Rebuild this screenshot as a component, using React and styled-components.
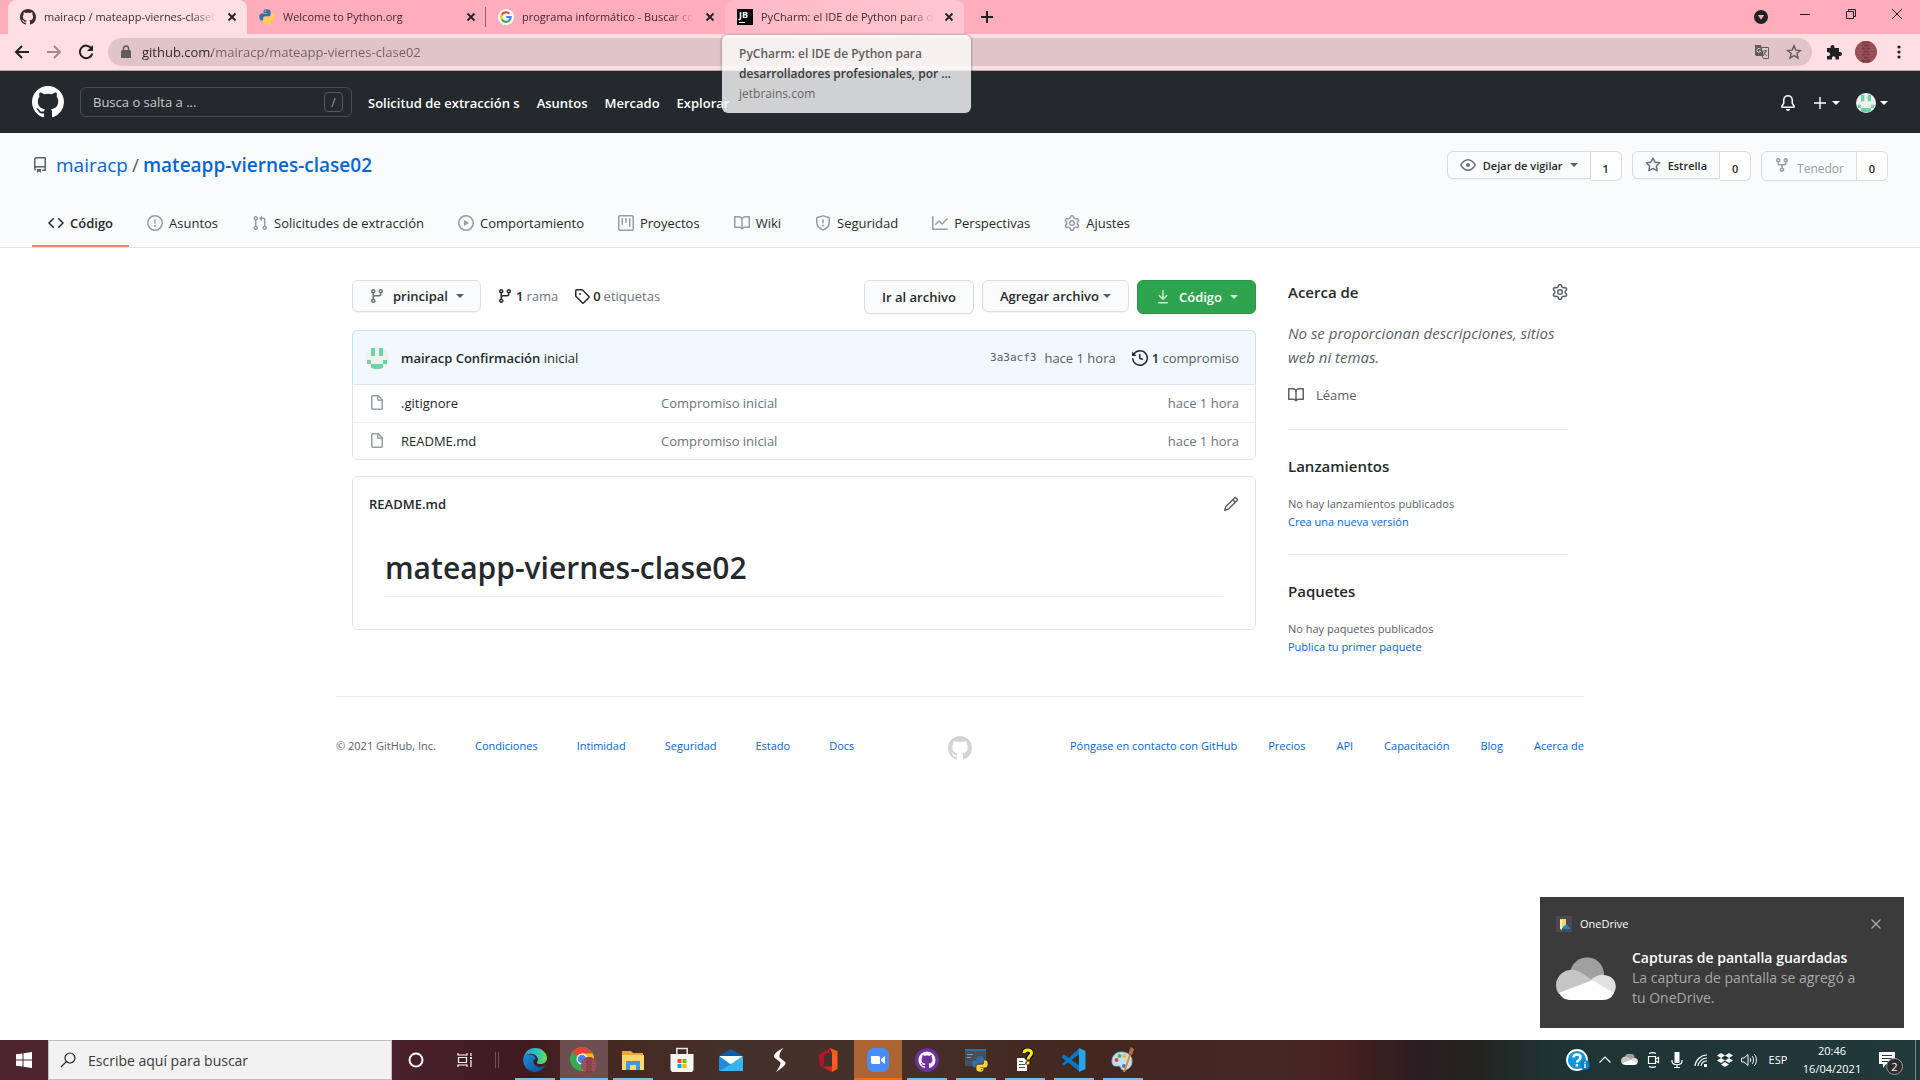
import React from 'react';
import styled, { createGlobalStyle, css } from 'styled-components';

const Global = createGlobalStyle`
  *, *::before, *::after { box-sizing: border-box; }
  body { margin: 0; background: #fff; }
  body, button, input { font-family: "Open Sans", "Noto Sans", sans-serif; }
  button { margin: 0; padding: 0; border: 0; background: none; color: inherit; cursor: pointer; }
  a { color: inherit; text-decoration: none; }
  svg { display: block; flex: none; }
  h1, h2, p, ul { margin: 0; padding: 0; }
  ul { list-style: none; }
`;

const Screen = styled.div`
  display: flex;
  flex-direction: column;
  min-height: 100vh;
  color: #24292e;
  font-size: 13px;
  line-height: 20px;
`;

/* ---------- icons ---------- */

const paths = {
  github: 'M8 0C3.58 0 0 3.58 0 8c0 3.54 2.29 6.53 5.47 7.59.4.07.55-.17.55-.38 0-.19-.01-.82-.01-1.49-2.01.37-2.53-.49-2.69-.94-.09-.23-.48-.94-.82-1.13-.28-.15-.68-.52-.01-.53.63-.01 1.08.58 1.23.82.72 1.21 1.87.87 2.33.66.07-.52.28-.87.51-1.07-1.78-.2-3.64-.89-3.64-3.95 0-.87.31-1.59.82-2.15-.08-.2-.36-1.02.08-2.12 0 0 .67-.21 2.2.82.64-.18 1.32-.27 2-.27.68 0 1.36.09 2 .27 1.53-1.04 2.2-.82 2.2-.82.44 1.1.16 1.92.08 2.12.51.56.82 1.27.82 2.15 0 3.07-1.87 3.75-3.65 3.95.29.25.54.73.54 1.48 0 1.07-.01 1.93-.01 2.2 0 .21.15.46.55.38A8.013 8.013 0 0016 8c0-4.42-3.58-8-8-8z',
  repo: 'M2 2.5A2.5 2.5 0 014.5 0h8.75a.75.75 0 01.75.75v12.5a.75.75 0 01-.75.75h-2.5a.75.75 0 110-1.5h1.75v-2h-8a1 1 0 00-.714 1.7.75.75 0 01-1.072 1.05A2.495 2.495 0 012 11.5v-9zm10.5-1V9h-8c-.356 0-.694.074-1 .208V2.5a1 1 0 011-1h8zM5 12.25v3.25a.25.25 0 00.4.2l1.45-1.087a.25.25 0 01.3 0L8.6 15.7a.25.25 0 00.4-.2v-3.25a.25.25 0 00-.25-.25h-3.5a.25.25 0 00-.25.25z',
  code: 'M4.72 3.22a.75.75 0 011.06 1.06L2.06 8l3.72 3.72a.75.75 0 11-1.06 1.06L.47 8.53a.75.75 0 010-1.06l4.25-4.25zm6.56 0a.75.75 0 10-1.06 1.06L13.94 8l-3.72 3.72a.75.75 0 101.06 1.06l4.25-4.25a.75.75 0 000-1.06l-4.25-4.25z',
  issue: 'M8 1.5a6.5 6.5 0 100 13 6.5 6.5 0 000-13zM0 8a8 8 0 1116 0A8 8 0 010 8zm9 3a1 1 0 11-2 0 1 1 0 012 0zm-.25-6.25a.75.75 0 00-1.5 0v3.5a.75.75 0 001.5 0v-3.5z',
  pull: 'M7.177 3.073L9.573.677A.25.25 0 0110 .854v4.792a.25.25 0 01-.427.177L7.177 3.427a.25.25 0 010-.354zM3.75 2.5a.75.75 0 100 1.5.75.75 0 000-1.5zm-2.25.75a2.25 2.25 0 113 2.122v5.256a2.251 2.251 0 11-1.5 0V5.372A2.25 2.25 0 011.5 3.25zM11 2.5h-1V4h1a1 1 0 011 1v5.628a2.251 2.251 0 101.5 0V5A2.5 2.5 0 0011 2.5zm1 10.25a.75.75 0 111.5 0 .75.75 0 01-1.5 0zM3.75 12a.75.75 0 100 1.5.75.75 0 000-1.5z',
  play: 'M1.5 8a6.5 6.5 0 1113 0 6.5 6.5 0 01-13 0zM8 0a8 8 0 100 16A8 8 0 008 0zM6.379 5.227A.25.25 0 006 5.442v5.117a.25.25 0 00.379.214l4.264-2.559a.25.25 0 000-.428L6.379 5.227z',
  project: 'M1.75 0A1.75 1.75 0 000 1.75v12.5C0 15.216.784 16 1.75 16h12.5A1.75 1.75 0 0016 14.25V1.75A1.75 1.75 0 0014.25 0H1.75zM1.5 1.75a.25.25 0 01.25-.25h12.5a.25.25 0 01.25.25v12.5a.25.25 0 01-.25.25H1.75a.25.25 0 01-.25-.25V1.75zM11.75 3a.75.75 0 00-.75.75v7.5a.75.75 0 001.5 0v-7.5a.75.75 0 00-.75-.75zm-8.25.75a.75.75 0 011.5 0v5.5a.75.75 0 01-1.5 0v-5.5zM8 3a.75.75 0 00-.75.75v3.5a.75.75 0 001.5 0v-3.5A.75.75 0 008 3z',
  book: 'M0 1.75A.75.75 0 01.75 1h4.253c1.227 0 2.317.59 3 1.501A3.744 3.744 0 0111.006 1h4.245a.75.75 0 01.75.75v10.5a.75.75 0 01-.75.75h-4.507a2.25 2.25 0 00-1.591.659l-.622.621a.75.75 0 01-1.06 0l-.622-.621A2.25 2.25 0 005.258 13H.75a.75.75 0 01-.75-.75V1.75zm8.755 3a2.25 2.25 0 012.25-2.25H14.5v9h-3.757c-.71 0-1.4.201-1.992.572l.004-7.322zm-1.504 7.324l.004-5.073-.002-2.253A2.25 2.25 0 005.003 2.5H1.5v9h3.757a3.75 3.75 0 011.994.574z',
  shield: 'M7.467.133a1.75 1.75 0 011.066 0l5.25 1.68A1.75 1.75 0 0115 3.48V7c0 1.566-.32 3.182-1.303 4.682-.983 1.498-2.585 2.813-5.032 3.855a1.7 1.7 0 01-1.33 0c-2.447-1.042-4.049-2.357-5.032-3.855C1.32 10.182 1 8.566 1 7V3.48a1.75 1.75 0 011.217-1.667l5.25-1.68zm.61 1.429a.25.25 0 00-.153 0l-5.25 1.68a.25.25 0 00-.174.238V7c0 1.358.275 2.666 1.057 3.86.784 1.194 2.121 2.34 4.366 3.297a.2.2 0 00.154 0c2.245-.956 3.582-2.104 4.366-3.298C13.225 9.666 13.5 8.36 13.5 7V3.48a.25.25 0 00-.174-.237l-5.25-1.68zM9 10.5a1 1 0 11-2 0 1 1 0 012 0zm-.25-5.75a.75.75 0 10-1.5 0v3a.75.75 0 001.5 0v-3z',
  graph: 'M1.5 1.75a.75.75 0 00-1.5 0v12.5c0 .414.336.75.75.75h14.5a.75.75 0 000-1.5H1.5V1.75zm14.28 2.53a.75.75 0 00-1.06-1.06L10 7.94 7.53 5.47a.75.75 0 00-1.06 0L3.22 8.72a.75.75 0 001.06 1.06L7 7.06l2.47 2.47a.75.75 0 001.06 0l5.25-5.25z',
  download: 'M7.47 10.78a.75.75 0 001.06 0l3.75-3.75a.75.75 0 00-1.06-1.06L8.75 8.44V1.75a.75.75 0 00-1.5 0v6.69L4.78 5.97a.75.75 0 00-1.06 1.06l3.75 3.75zM3.75 13a.75.75 0 000 1.5h8.5a.75.75 0 000-1.5h-8.5z',
  history: 'M1.643 3.143L.427 1.927A.25.25 0 000 2.104V5.75c0 .138.112.25.25.25h3.646a.25.25 0 00.177-.427L2.715 4.215a6.5 6.5 0 11-1.18 4.458.75.75 0 10-1.493.154 8.001 8.001 0 101.6-5.684zM7.75 4a.75.75 0 01.75.75v2.992l2.028.812a.75.75 0 01-.557 1.392l-2.5-1A.75.75 0 017 8.25v-3.5A.75.75 0 017.75 4z',
  gear: 'M7.429 1.525a6.593 6.593 0 011.142 0c.036.003.108.036.137.146l.289 1.105c.147.56.55.967.997 1.189.174.086.341.183.501.29.417.278.97.423 1.53.27l1.102-.303c.11-.03.175.016.195.046.219.31.41.641.573.989.014.031.022.11-.059.19l-.815.806c-.411.406-.562.957-.53 1.456a4.588 4.588 0 010 .582c-.032.499.119 1.05.53 1.456l.815.806c.08.08.073.159.059.19a6.494 6.494 0 01-.573.99c-.02.029-.086.074-.195.045l-1.103-.303c-.559-.153-1.112-.008-1.529.27-.16.107-.327.204-.5.29-.449.222-.851.628-.998 1.189l-.289 1.105c-.029.11-.101.143-.137.146a6.613 6.613 0 01-1.142 0c-.036-.003-.108-.037-.137-.146l-.289-1.105c-.147-.56-.55-.967-.997-1.189a4.502 4.502 0 01-.501-.29c-.417-.278-.97-.423-1.53-.27l-1.102.303c-.11.03-.175-.016-.195-.046a6.492 6.492 0 01-.573-.989c-.014-.031-.022-.11.059-.19l.815-.806c.411-.406.562-.957.53-1.456a4.587 4.587 0 010-.582c.032-.499-.119-1.05-.53-1.456l-.815-.806c-.08-.08-.073-.159-.059-.19a6.44 6.44 0 01.573-.99c.02-.029.086-.075.195-.045l1.103.303c.559.153 1.112.008 1.529-.27.16-.107.327-.204.5-.29.449-.222.851-.628.998-1.189l.289-1.105c.029-.11.101-.143.137-.146zM8 0c-.236 0-.47.01-.701.03-.743.065-1.29.615-1.458 1.261l-.29 1.106c-.017.066-.078.158-.211.224a5.994 5.994 0 00-.668.386c-.123.082-.233.09-.3.071L3.27 2.776c-.644-.177-1.392.02-1.82.63a7.977 7.977 0 00-.704 1.217c-.315.675-.111 1.422.363 1.891l.815.806c.05.048.098.147.088.294a6.084 6.084 0 000 .772c.01.147-.038.246-.088.294l-.815.806c-.474.469-.678 1.216-.363 1.891.2.428.436.835.704 1.218.428.609 1.176.806 1.82.63l1.103-.303c.066-.019.176-.011.299.071.213.143.436.272.668.386.133.066.194.158.212.224l.289 1.106c.169.646.715 1.196 1.458 1.26a8.094 8.094 0 001.402 0c.743-.064 1.29-.614 1.458-1.26l.29-1.106c.017-.066.078-.158.211-.224a5.98 5.98 0 00.668-.386c.123-.082.233-.09.3-.071l1.102.302c.644.177 1.392-.02 1.82-.63.268-.382.505-.789.704-1.217.315-.675.111-1.422-.364-1.891l-.814-.806c-.05-.048-.098-.147-.088-.294a6.1 6.1 0 000-.772c-.01-.147.039-.246.088-.294l.814-.806c.475-.469.679-1.216.364-1.891a7.992 7.992 0 00-.704-1.218c-.428-.609-1.176-.806-1.82-.63l-1.103.303c-.066.019-.176.011-.299-.071a5.991 5.991 0 00-.668-.386c-.133-.066-.194-.158-.212-.224L10.16 1.29C9.99.645 9.444.095 8.701.031A8.094 8.094 0 008 0zm1.5 8a1.5 1.5 0 11-3 0 1.5 1.5 0 013 0zM11 8a3 3 0 11-6 0 3 3 0 016 0z',
  file: 'M3.75 1.5a.25.25 0 00-.25.25v11.5c0 .138.112.25.25.25h8.5a.25.25 0 00.25-.25V6H9.75A1.75 1.75 0 018 4.25V1.5H3.75zm5.75.56v2.19c0 .138.112.25.25.25h2.19L9.5 2.06zM2 1.75C2 .784 2.784 0 3.75 0h5.086c.464 0 .909.184 1.237.513l3.414 3.414c.329.328.513.773.513 1.237v8.086A1.75 1.75 0 0112.25 15h-8.5A1.75 1.75 0 012 13.25V1.75z',
  branch: 'M11.75 2.5a.75.75 0 100 1.5.75.75 0 000-1.5zm-2.25.75a2.25 2.25 0 113 2.122V6A2.5 2.5 0 0110 8.5H6a1 1 0 00-1 1v1.128a2.251 2.251 0 11-1.5 0V5.372a2.25 2.25 0 111.5 0v1.836A2.492 2.492 0 016 7h4a1 1 0 001-1v-.628A2.25 2.25 0 019.5 3.25zM4.25 12a.75.75 0 100 1.5.75.75 0 000-1.5zM3.5 3.25a.75.75 0 111.5 0 .75.75 0 01-1.5 0z',
  fork: 'M5 3.25a.75.75 0 11-1.5 0 .75.75 0 011.5 0zm0 2.122a2.25 2.25 0 10-1.5 0v.878A2.25 2.25 0 005.75 8.5h1.5v2.128a2.251 2.251 0 101.5 0V8.5h1.5a2.25 2.25 0 002.25-2.25v-.878a2.25 2.25 0 10-1.5 0v.878a.75.75 0 01-.75.75h-4.5A.75.75 0 015 6.25v-.878zm3.75 7.378a.75.75 0 11-1.5 0 .75.75 0 011.5 0zm3-8.75a.75.75 0 100-1.5.75.75 0 000 1.5z',
  star: 'M8 .25a.75.75 0 01.673.418l1.882 3.815 4.21.612a.75.75 0 01.416 1.279l-3.046 2.97.719 4.192a.75.75 0 01-1.088.791L8 12.347l-3.766 1.98a.75.75 0 01-1.088-.79l.72-4.194L.818 6.374a.75.75 0 01.416-1.28l4.21-.611L7.327.668A.75.75 0 018 .25zm0 2.445L6.615 5.5a.75.75 0 01-.564.41l-3.097.45 2.24 2.184a.75.75 0 01.216.664l-.528 3.084 2.769-1.456a.75.75 0 01.698 0l2.77 1.456-.53-3.084a.75.75 0 01.216-.664l2.24-2.183-3.096-.45a.75.75 0 01-.564-.41L8 2.694v.001z',
  eye: 'M1.679 7.932c.412-.621 1.242-1.75 2.366-2.717C5.175 4.242 6.527 3.5 8 3.5c1.473 0 2.824.742 3.955 1.715 1.124.967 1.954 2.096 2.366 2.717a.119.119 0 010 .136c-.412.621-1.242 1.75-2.366 2.717C10.825 11.758 9.473 12.5 8 12.5c-1.473 0-2.824-.742-3.955-1.715C2.92 9.818 2.09 8.69 1.679 8.068a.119.119 0 010-.136zM8 2c-1.981 0-3.67.992-4.933 2.078C1.797 5.169.88 6.423.43 7.1a1.619 1.619 0 000 1.798c.45.678 1.367 1.932 2.637 3.024C4.329 13.008 6.019 14 8 14c1.981 0 3.67-.992 4.933-2.078 1.27-1.091 2.187-2.345 2.637-3.023a1.619 1.619 0 000-1.798c-.45-.678-1.367-1.932-2.637-3.023C11.671 2.992 9.981 2 8 2zm0 8a2 2 0 100-4 2 2 0 000 4z',
  tag: 'M2.5 7.775V2.75a.25.25 0 01.25-.25h5.025a.25.25 0 01.177.073l6.25 6.25a.25.25 0 010 .354l-5.025 5.025a.25.25 0 01-.354 0l-6.25-6.25a.25.25 0 01-.073-.177zm-1.5 0V2.75C1 1.784 1.784 1 2.75 1h5.025c.464 0 .91.184 1.238.513l6.25 6.25a1.75 1.75 0 010 2.474l-5.026 5.026a1.75 1.75 0 01-2.474 0l-6.25-6.25A1.75 1.75 0 011 7.775zM6 5a1 1 0 100 2 1 1 0 000-2z',
  pencil: 'M11.013 1.427a1.75 1.75 0 012.474 0l1.086 1.086a1.75 1.75 0 010 2.474l-8.61 8.61c-.21.21-.47.364-.756.445l-3.251.93a.75.75 0 01-.927-.928l.929-3.25a1.75 1.75 0 01.445-.758l8.61-8.61zm1.414 1.06a.25.25 0 00-.354 0L10.811 3.75l1.439 1.44 1.263-1.263a.25.25 0 000-.354l-1.086-1.086zM11.189 6.25L9.75 4.81l-6.286 6.287a.25.25 0 00-.064.108l-.558 1.953 1.953-.558a.249.249 0 00.108-.064l6.286-6.286z',
  bell: 'M8 16a2 2 0 001.985-1.75c.017-.137-.097-.25-.235-.25h-3.5c-.138 0-.252.113-.235.25A2 2 0 008 16zM8 1.5A3.5 3.5 0 004.5 5v2.947c0 .346-.102.683-.294.97L2.5 11.5h11l-1.706-2.583a1.75 1.75 0 01-.294-.97V5A3.5 3.5 0 008 1.5zM3 5a5 5 0 0110 0v2.947c0 .05.015.098.042.139l1.703 2.555A1.518 1.518 0 0113.482 13H2.518a1.518 1.518 0 01-1.263-2.36l1.703-2.554A.25.25 0 003 7.947V5z',
};

const Octicon = ({ name, size = 16 }) => (
  <svg width={size} height={size} viewBox="0 0 16 16" fill="currentColor" fillRule="evenodd" aria-hidden="true">
    <path d={paths[name]} />
  </svg>
);

const Caret = styled.span`
  width: 0;
  height: 0;
  border: 4px solid transparent;
  border-top-color: currentColor;
  border-bottom-width: 0;
  opacity: ${(p) => (p.$soft ? 0.75 : 1)};
`;

const Line = ({ d, size = 16, box = 16, w = 1, children }) => (
  <svg width={size} height={size} viewBox={`0 0 ${box} ${box}`} fill="none" stroke="currentColor" strokeWidth={w} aria-hidden="true">
    <path d={d} />
    {children}
  </svg>
);

const Python = ({ size = 16 }) => (
  <svg width={size} height={size} viewBox="0 0 16 16" aria-hidden="true">
    <path fill="#3673a5" d="M7.900.3C5 .3 4.500 1.300 4.500 2.400V4h3.600v.6H2.800C1.200 4.600.3 5.900.3 8s.9 3.400 2.200 3.400h1.400V9.600c0-1.300 1.100-2.300 2.400-2.300h3.400c1.100 0 1.900-.9 1.900-2V2.400C11.600 1.200 10.400.3 7.900.3zM6.200 1.500a.7.7 0 110 1.400.7.7 0 010-1.400z" />
    <path fill="#ffd43b" d="M8.100 15.700c2.900 0 3.400-1 3.400-2.100V12H7.900v-.6h5.300c1.600 0 2.500-1.300 2.500-3.400s-.9-3.400-2.200-3.400h-1.400v1.800c0 1.300-1.100 2.300-2.400 2.300H6.300c-1.100 0-1.900.9-1.900 2v2.900c0 1.200 1.200 2.100 3.700 2.100zm1.700-1.200a.7.7 0 110-1.400.7.7 0 010 1.400z" />
  </svg>
);

const Google = () => (
  <svg width="16" height="16" viewBox="0 0 16 16" aria-hidden="true">
    <circle cx="8" cy="8" r="8" fill="#fff" />
    <g fill="none" strokeWidth="2.200">
      <path stroke="#ea4335" d="M3.800 5.700A4.800 4.800 0 0111.300 4.600" />
      <path stroke="#fbbc05" d="M3.900 10.400a4.800 4.800 0 010-4.800" />
      <path stroke="#34a853" d="M3.800 10.300a4.800 4.800 0 007.500 1.200" />
      <path stroke="#4285f4" d="M8.200 8h4.500c0 1.500-.5 2.700-1.500 3.600" />
    </g>
  </svg>
);

const JetBox = styled.span`
  display: flex;
  flex: none;
  width: 16px;
  height: 16px;
  padding-left: 2px;
  background: linear-gradient(#fff, #fff) 2px 13px / 6px 1px no-repeat #000;
  color: #fff;
  font: 700 9px/12px "Open Sans", sans-serif;
`;

const Identicon = ({ size }) => (
  <svg width={size} height={size} viewBox="0 0 24 24" aria-hidden="true">
    <circle cx="12" cy="12" r="12" fill="#f0f0f0" />
    <path fill="#68d5a2" d="M6 2h4v8H6zM14 2h4v8h-4zM2 14h4v4H2zM18 14h4v4h-4zM6 18h12v3.500l-3 1.500H9l-3-1.500z" />
  </svg>
);

const BrickFace = ({ size }) => (
  <svg width={size} height={size} viewBox="0 0 22 22" aria-hidden="true">
    <defs>
      <clipPath id={`brick${size}`}><circle cx="11" cy="11" r="11" /></clipPath>
    </defs>
    <g clipPath={`url(#brick${size})`}>
      <path fill="#93484f" d="M0 0h22v22H0z" />
      <path fill="#6a2a33" d="M7 0h8v22H7z" opacity=".5" />
      <path stroke="#b07078" strokeWidth=".5" d="M0 3h22M0 6h22M0 9h22M0 12h22M0 15h22M0 18h22M5 0v3M11 0v3M17 0v3M3 3v3M8 3v3M14 3v3M5 6v3M11 6v3M17 6v3M3 9v3M8 9v3M14 9v3M5 12v3M11 12v3M17 12v3M3 15v3M8 15v3M14 15v3M5 18v4M11 18v4M17 18v4" />
    </g>
  </svg>
);

/* ---------- browser frame ---------- */

const TabStrip = styled.div`
  display: flex;
  height: 34px;
  padding-left: 8px;
  background: #ffadbc;
  color: #3c2c30;
`;

const Tab = styled.div`
  display: flex;
  align-items: center;
  flex: 0 1 239px;
  gap: 8px;
  min-width: 0;
  padding: 0 7px 0 12px;
  border-radius: 8px 8px 0 0;
  font-size: 11px;
  ${(p) => p.$state === 'active' && css`background: #ffdee4;`}
  ${(p) => p.$state === 'hover' && css`background: linear-gradient(90deg, #ffb9c6, #ffc6d1);`}
  ${(p) => p.$divider && css`
    border-radius: 0;
    background: linear-gradient(#96626c, #96626c) right center / 1px 20px no-repeat;
  `}
`;

const TabTitle = styled.span`
  flex: 1;
  min-width: 0;
  white-space: nowrap;
  mask-image: linear-gradient(90deg, #000 calc(100% - 24px), transparent);
`;

const IconButton = styled.button`
  display: flex;
  align-items: center;
  justify-content: center;
  flex: none;
  width: ${(p) => p.$w || 16}px;
  height: ${(p) => p.$h || 16}px;
  color: ${(p) => p.$color || '#202124'};
`;

const WindowControls = styled.div`
  display: flex;
  align-items: flex-start;
  margin-left: auto;
`;

const Toolbar = styled.div`
  display: flex;
  align-items: center;
  height: 37px;
  padding: 0 5px 0 6px;
  background: #ffdee4;
  border-bottom: 1px solid #b8a0a5;
`;

const Omnibox = styled.div`
  display: flex;
  align-items: center;
  flex: 1;
  height: 28px;
  margin: 0 6px;
  padding: 0 10px 0 12px;
  gap: 8px;
  border-radius: 14px;
  background: #e1c4c9;
  color: #5f5a5c;
`;

const Address = styled.input`
  flex: 1;
  min-width: 0;
  padding: 0 2px;
  border: 0;
  outline: 0;
  font-size: 13px;
  background: linear-gradient(90deg, #2c2628 72px, #6f6064 72px);
  background-clip: text;
  color: transparent;
`;

const HoverCard = styled.div`
  position: absolute;
  top: 35px;
  left: 722px;
  width: 249px;
  height: 78px;
  padding: 9px 17px;
  border-radius: 6px;
  background: rgba(251, 251, 251, 0.8);
  box-shadow: 0 0 2px 1px rgba(60, 60, 60, 0.35);
  color: #6a6668;
  font-size: 12px;
  line-height: 20px;
  white-space: nowrap;
`;

const CardTitle = styled.p`
  font-weight: 600;
  color: ${(p) => (p.$dark ? '#3b3c3e' : '#625e60')};
`;

/* ---------- GitHub header ---------- */

const SiteHeader = styled.header`
  display: flex;
  align-items: center;
  gap: 16px;
  height: 62px;
  padding: 0 32px;
  background: #24292e;
  color: #fff;
`;

const SearchBox = styled.label`
  display: flex;
  align-items: center;
  width: 272px;
  height: 30px;
  padding: 0 8px 0 12px;
  border: 1px solid #444d56;
  border-radius: 6px;
`;

const SearchInput = styled.input`
  flex: 1;
  min-width: 0;
  padding: 0;
  border: 0;
  outline: 0;
  background: none;
  color: #fff;
  font-size: 13px;
  &::placeholder { color: #c6c9cc; opacity: 1; }
`;

const Slash = styled.kbd`
  display: flex;
  align-items: center;
  justify-content: center;
  width: 19px;
  height: 20px;
  border: 1px solid #55595e;
  border-radius: 4px;
  color: #9a9ea2;
  font: 12px "Open Sans", sans-serif;
`;

const SiteNav = styled.nav`
  display: flex;
  gap: 17px;
  padding-top: 2px;
  font-weight: 600;
`;

const HeaderActions = styled.div`
  display: flex;
  align-items: center;
  gap: 16px;
  margin-left: auto;
  padding-top: 2px;
`;

const MenuButton = styled.button`
  display: flex;
  align-items: center;
  gap: 4px;
`;

/* ---------- repository head ---------- */

const RepoHead = styled.div`
  padding: 16px 32px 0;
  background: #fafbfc;
  border-bottom: 1px solid #e1e4e8;
`;

const RepoRow = styled.div`
  display: flex;
  justify-content: space-between;
  height: 50px;
`;

const Breadcrumb = styled.div`
  display: flex;
  align-items: center;
  height: 32px;
  gap: 4px;
  color: #586069;
  font-size: 19px;
  line-height: 32px;
  svg { margin-right: 4px; }
  a { color: #0366d6; }
  strong { font-weight: 600; }
`;

const RepoActions = styled.div`
  display: flex;
  align-items: flex-start;
  gap: 10px;
  padding-top: 2px;
`;

const ButtonGroup = styled.div`
  display: flex;
  align-items: flex-start;
`;

const ActionButton = styled.button`
  display: flex;
  align-items: center;
  gap: 7px;
  height: ${(p) => (p.$tall ? 30 : 28)}px;
  padding: 0 12px;
  border: 1px solid #d9dbdd;
  border-radius: 6px 0 0 6px;
  background: #fafbfc;
  box-shadow: 0 1px 0 rgba(27, 31, 35, 0.04);
  color: #24292e;
  font-size: 11px;
  font-weight: 600;
  white-space: nowrap;
  svg { color: #6a737d; }
  &:disabled { color: #959da5; font-weight: 400; font-size: 12px; line-height: 26px; align-items: flex-start; padding-top: 4px; }
  &:disabled svg { color: #959da5; margin-top: 1px; }
`;

const Count = styled.a`
  height: 30px;
  min-width: 31px;
  padding: 0 11px;
  border: 1px solid #d9dbdd;
  border-left: 0;
  border-radius: 0 6px 6px 0;
  background: #fff;
  font-size: 11px;
  font-weight: 600;
  line-height: 33px;
  text-align: center;
`;

const RepoTabs = styled.nav`
  display: flex;
  gap: 2px;
`;

const RepoTab = styled.a`
  display: flex;
  align-items: center;
  gap: 6px;
  height: 48px;
  padding: 2px 16px 0;
  border-bottom: 2px solid ${(p) => (p.$on ? '#f9826c' : 'transparent')};
  font-weight: ${(p) => (p.$on ? 600 : 400)};
  svg { color: ${(p) => (p.$on ? '#24292e' : '#959da5')}; }
`;

/* ---------- main content ---------- */

const Content = styled.main`
  display: grid;
  grid-template-columns: minmax(0, 1fr) 280px;
  gap: 32px;
  width: 100%;
  max-width: 1280px;
  margin: 0 auto;
  padding: 32px 32px 0;
`;

const FileBar = styled.div`
  display: flex;
  align-items: flex-start;
  gap: 8px;
  height: 34px;
  margin-bottom: 16px;
`;

const BarButton = styled.button`
  display: flex;
  align-items: center;
  justify-content: center;
  gap: ${(p) => p.$gap || 4}px;
  height: ${(p) => (p.$tall ? 34 : 32)}px;
  padding: 0 ${(p) => p.$pad || 17}px;
  border: 1px solid #dcdee0;
  border-radius: 6px;
  background: #fafbfc;
  box-shadow: 0 1px 0 rgba(27, 31, 35, 0.04);
  font-size: 13px;
  font-weight: 600;
  white-space: nowrap;
  svg { color: #6a737d; }
  ${(p) => p.$primary && css`
    background: #2ea44f;
    border-color: #2a9447;
    color: #fff;
    svg { color: #c8e8d0; }
  `}
`;

const Stat = styled.a`
  display: flex;
  align-items: center;
  gap: 3px;
  height: 32px;
  padding-left: 8px;
  color: #6a737d;
  white-space: nowrap;
  strong, svg { color: #24292e; }
  strong { font-weight: 600; }
`;

const Spacer = styled.span`
  flex: 1;
`;

const Box = styled.section`
  border: 1px solid #e1e4e8;
  border-radius: 6px;
  margin-bottom: 16px;
`;

const CommitBar = styled.div`
  display: flex;
  align-items: center;
  gap: 12px;
  height: 55px;
  margin: -1px -1px 0;
  padding: 0 16px 0 12px;
  border: 1px solid #c8e1ff;
  border-bottom-color: #e1e7ee;
  border-radius: 6px 6px 0 0;
  background: #f1f8ff;
  strong { font-weight: 600; }
`;

const CommitMeta = styled.div`
  display: flex;
  align-items: center;
  gap: 8px;
  margin-left: auto;
  color: #586069;
  code { font: 11px/22px "DejaVu Sans Mono", monospace; }
`;

const Commits = styled.a`
  display: flex;
  align-items: center;
  gap: 4px;
  padding-left: 8px;
  strong, svg { color: #24292e; }
`;

const Files = styled.table`
  width: 100%;
  table-layout: fixed;
  border-collapse: collapse;
  td { height: 37px; padding: 0; color: #6a737d; }
  tr + tr td { border-top: 1px solid #eaecef; }
  td:first-child { width: 48px; padding-left: 16px; color: #959da5; }
  td:nth-child(2) { width: 260px; color: #24292e; }
  td:last-child { width: 160px; padding-right: 16px; text-align: right; }
`;

const ReadmeHead = styled.div`
  display: flex;
  align-items: center;
  justify-content: space-between;
  padding: 17px 16px 16px;
  font-weight: 600;
  svg { color: #586069; }
`;

const ReadmeBody = styled.div`
  padding: 17px 32px 32px;
`;

const Heading = styled.h1`
  padding-bottom: 7px;
  border-bottom: 1px solid #eaecef;
  font-size: 30px;
  font-weight: 600;
  line-height: 42px;
`;

const Panel = styled.section`
  padding-bottom: ${(p) => (p.$roomy ? 24 : 23)}px;
  & + & { padding-top: 24px; border-top: 1px solid #eaecef; }
`;

const PanelTitle = styled.h2`
  display: flex;
  align-items: center;
  justify-content: space-between;
  margin-bottom: 17px;
  font-size: 15px;
  font-weight: 600;
  line-height: 24px;
  svg { color: #586069; }
`;

const Blurb = styled.p`
  color: #586069;
  font-size: 15px;
  font-style: italic;
  line-height: 24px;
`;

const ReadmeLink = styled.a`
  display: flex;
  align-items: center;
  gap: 12px;
  margin-top: 16px;
  color: #586069;
`;

const Note = styled.p`
  color: #586069;
  font-size: 11px;
  line-height: 18px;
  a { color: #0366d6; }
`;

const Footer = styled.footer`
  display: grid;
  grid-template-columns: 1fr auto 1fr;
  align-items: center;
  width: calc(100% - 32px);
  max-width: 1248px;
  margin: 17px auto 0;
  padding-top: 39px;
  border-top: 1px solid #eaecef;
  color: #586069;
  font-size: 11px;
  > svg { color: #d1d5da; }
`;

const FooterLinks = styled.ul`
  display: flex;
  gap: ${(p) => p.$gap}px;
  justify-content: ${(p) => (p.$end ? 'flex-end' : 'flex-start')};
  padding-bottom: 4px;
  a { color: #0366d6; }
`;

/* ---------- notification ---------- */

const Toast = styled.aside`
  position: fixed;
  right: 16px;
  bottom: 52px;
  width: 364px;
  height: 131px;
  padding: 17px 16px 0;
  background: #3b3b3b;
  color: #a8a8a8;
  font-size: 14px;
  line-height: 20px;
`;

const ToastHead = styled.div`
  display: flex;
  align-items: center;
  gap: 8px;
  height: 20px;
  margin-bottom: 14px;
  color: #fff;
  font-size: 11px;
  button { margin-left: auto; }
`;

const ToastBody = styled.div`
  display: flex;
  gap: 16px;
  padding-right: 20px;
  svg { margin-top: 5px; }
  strong { display: block; color: #fff; font-weight: 600; }
`;

/* ---------- taskbar ---------- */

const Taskbar = styled.div`
  position: relative;
  display: flex;
  align-items: stretch;
  height: 40px;
  margin-top: auto;
  background: linear-gradient(90deg, #4e2431 0, #4a212d 20%, #3f1a20 27%, #45291f 31%, #44302a 38%, #46302a 46%, #43271f 57%, #472722 67%, #46211f 70%, #2a1e22 74%, #23241f 77%, #1e3334 81%, #22393c 100%);
  color: #fff;
`;

const StartButton = styled(IconButton)`
  width: 48px;
  height: 40px;
`;

const TaskSearch = styled.label`
  display: flex;
  align-items: center;
  gap: 12px;
  width: 344px;
  padding: 0 11px;
  border: 1px solid #bfbfbf;
  background: #f2f2f2;
  color: #222;
  input { flex: 1; min-width: 0; padding: 0; border: 0; outline: 0; background: none; font-size: 14px; }
  input::placeholder { color: #3a3a3a; opacity: 1; }
`;

const Grip = styled.span`
  width: 4px;
  height: 16px;
  margin: 12px 12px 12px 5px;
  border: solid #70535a;
  border-width: 0 1px;
`;

const Task = styled.button`
  display: flex;
  align-items: center;
  justify-content: center;
  width: 48px;
  margin-right: 1px;
  background: ${(p) => p.$fill || 'transparent'};
  ${(p) => p.$bar && css`
    background-image: linear-gradient(${p.$bar}, ${p.$bar});
    background-repeat: no-repeat;
    background-position: center bottom;
    background-size: ${p.$fill ? 48 : 40}px 2px;
  `}
`;

const Tray = styled.div`
  display: flex;
  align-items: center;
  margin-left: auto;
`;

const TrayButton = styled.button`
  display: flex;
  align-items: center;
  justify-content: center;
  width: ${(p) => p.$w || 24}px;
  height: 40px;
  color: #fff;
  font-size: 11px;
  line-height: 18px;
  white-space: nowrap;
`;

const Notices = styled(TrayButton)`
  position: relative;
  margin-right: 10px;
`;

const Badge = styled.span`
  position: absolute;
  top: 18px;
  left: 17px;
  width: 17px;
  height: 17px;
  border: 1px solid #9a9a9a;
  border-radius: 50%;
  background: #2c2c2c;
  font-size: 11px;
  line-height: 15px;
  text-align: center;
`;

const PeekButton = styled.button`
  width: 5px;
  height: 40px;
  border-left: 1px solid #74878a;
`;

const Edge = () => (
  <svg width="24" height="24" viewBox="0 0 24 24" aria-hidden="true">
    <defs>
      <linearGradient id="eg1" x1="0" x2="1"><stop stopColor="#1d9fdb" /><stop offset=".6" stopColor="#35c1b5" /><stop offset="1" stopColor="#6ae04f" /></linearGradient>
      <linearGradient id="eg2" x1="0" y1="0" x2="1" y2="1"><stop stopColor="#1f8fdc" /><stop offset="1" stopColor="#0b4a95" /></linearGradient>
    </defs>
    <path fill="url(#eg2)" d="M.3 10.500C1.500 6 6.500 5.800 9.800 7.300c2.400 1.100 3 3 2.700 4-.9-.4-2 .5-2.200 1.800-.4 3.400 3.300 6.300 7.300 5.900 1.900-.2 3-.9 3.700-1.200.5-.1.8.3.5.8C19.400 22 16 24 12 24 5 24-.6 18 .3 10.500z" />
    <path fill="url(#eg1)" d="M.3 11C.9 4.500 6 0 12 0c7 0 12 5 12 10 0 3.800-2.900 6-6.300 6-2.500 0-4-.8-4-1.600 0-.6 1.200-1.200 1.200-3 0-2.700-3-5.700-7.500-5.700C3.500 5.700.9 8.500.3 11z" />
  </svg>
);

const Chrome = () => (
  <svg width="28" height="26" viewBox="0 0 28 26" aria-hidden="true">
    <circle cx="12" cy="12" r="12" fill="#34a853" />
    <path fill="#ea4335" d="M12 12L2 5.500A12 12 0 0122.500 6.500H12z" />
    <path fill="#fbbc05" d="M12 6.500h10.700A12 12 0 0112 24l5-9z" />
    <circle cx="12" cy="12" r="5.500" fill="#fff" />
    <circle cx="12" cy="12" r="4.300" fill="#4285f4" />
    <g transform="translate(11 10)"><BrickFace size={16} /></g>
  </svg>
);

const Folder = () => (
  <svg width="24" height="24" viewBox="0 0 24 24" aria-hidden="true">
    <path fill="#e8a92c" d="M1 3h9l2 2h10v5H1z" />
    <path fill="#ffd869" d="M1 7h22v15H1z" />
    <path fill="#3f97dc" d="M5 13h14v9h-4v-5H9v5H5z" />
  </svg>
);

const Store = () => (
  <svg width="24" height="26" viewBox="0 0 24 26" aria-hidden="true">
    <path fill="none" stroke="#e8e8e8" strokeWidth="1.500" d="M6.800 7V1.500h10.400V7" />
    <path fill="#f5f5f5" d="M.5 7h23v16l-1.500 2H2L.5 23z" />
    <path fill="#f25022" d="M7.500 12h4v4h-4z" /><path fill="#7fba00" d="M12.500 12h4v4h-4z" />
    <path fill="#00a4ef" d="M7.500 17h4v4h-4z" /><path fill="#ffb900" d="M12.500 17h4v4h-4z" />
  </svg>
);

const Mail = () => (
  <svg width="24" height="24" viewBox="0 0 24 24" aria-hidden="true">
    <path fill="#0a5da6" d="M0 8l12-7 12 7v4H0z" />
    <path fill="#fff" d="M1 8h22v8H1z" />
    <path fill="#1a8fe0" d="M0 8l12 8.500L0 23z" />
    <path fill="#35b4f0" d="M24 8v15H0l12-7z" />
  </svg>
);

const Swirl = () => (
  <svg width="16" height="24" viewBox="0 0 16 24" aria-hidden="true">
    <path fill="#fff" d="M11.500 0C6 2.500 2 5.500 2 8.500c0 1.500 6.500 5 6.500 6.500 0 2.500-2.500 6-4.500 9 5-3.500 9.500-6.500 9.500-9 0-1.500-6.200-5-6.200-6.500C7.300 5.500 9 2.500 11.500 0z" />
  </svg>
);

const Office = () => (
  <svg width="20" height="24" viewBox="0 0 20 24" aria-hidden="true">
    <path fill="#b5122e" d="M0 6.500L11 0v4.500L5 7v9.500L1 19z" />
    <path fill="#ff5a1f" d="M11 0l7.500 3v18L13 24V5z" />
    <path fill="#d3261b" d="M2.500 18.500H13V24z" />
  </svg>
);

const Zoom = () => (
  <svg width="24" height="24" viewBox="0 0 24 24" aria-hidden="true">
    <rect x="1" width="22" height="24" rx="7" fill="#4a8cff" />
    <path fill="#fff" d="M5 8h7c1.500 0 2 .6 2 2v6H7c-1.500 0-2-.6-2-2zM15 11l4-3v8l-4-3z" />
  </svg>
);

const GithubDesktop = () => (
  <svg width="24" height="24" viewBox="0 0 24 24" aria-hidden="true">
    <circle cx="12" cy="12" r="12" fill="#6e2fa0" />
    <path transform="translate(3.500 3.500) scale(1.060)" fill="#fff" d={paths.github} />
  </svg>
);

const PyConsole = () => (
  <svg width="24" height="24" viewBox="0 0 24 24" aria-hidden="true">
    <path fill="#47505a" d="M1 1h21v17H1z" /><path fill="#2f6ea8" d="M1 1h21v2H1z" />
    <path fill="#8b97a2" d="M3 6h6v1H3zM3 9h4v1H3z" />
    <svg x="8" y="8" width="16" height="16"><Python size={16} /></svg>
  </svg>
);

const HelpDoc = () => (
  <svg width="18" height="24" viewBox="0 0 18 24" aria-hidden="true">
    <path fill="#fff" d="M1 10h7l3 3v10H1z" />
    <path stroke="#555" d="M3 13.500h4M3 16.500h6M3 19.500h6" />
    <path fill="none" stroke="#000" strokeWidth="5" d="M8 5c0-4 7.500-4 7.500 0 0 3-3.500 3.500-3.500 6.500M12 13.500v3" />
    <path fill="none" stroke="#ffee00" strokeWidth="3" d="M8 5c0-4 7.500-4 7.500 0 0 3-3.500 3.500-3.500 6.500M12 13.500v3" />
  </svg>
);

const VsCode = () => (
  <svg width="24" height="24" viewBox="0 0 24 24" aria-hidden="true">
    <path fill="#0a77c4" d="M0 8l2-1.500L18 18v6L0 9.500zM17 6.500L2 17.500 0 16 17 .5z" />
    <path fill="#2aa3ee" d="M17 0l6.500 3v18L17 24z" />
  </svg>
);

const Paint = () => (
  <svg width="24" height="26" viewBox="0 0 24 26" aria-hidden="true">
    <path fill="#c5dff0" stroke="#8ab4d0" d="M10 5c6 0 11 3 11 9 0 6-4 9-9 9-3 0-1-4-4-4-3 0-7 1-7-5 0-5 4-9 9-9z" />
    <circle cx="5.500" cy="13" r="2" fill="#d94a3d" /><circle cx="8.500" cy="9" r="2" fill="#4fae4e" />
    <circle cx="13.500" cy="9" r="2" fill="#f2b632" /><circle cx="13" cy="19" r="2" fill="#3a7bd0" />
    <path stroke="#e88a25" strokeWidth="2" d="M19 8l-6 17" /><path fill="#a9744a" d="M18 4l2-4 3 2-2 6-3-1z" />
  </svg>
);

const CloudArt = ({ width }) => (
  <svg width={width} viewBox="0 0 60 39" aria-hidden="true">
    <path fill="#a0a0a0" d="M14 12A17 17 0 0148 15L36 22z" />
    <path fill="#c6c6c6" d="M14 9c7-1 12 3 22 10L3 33C-4 24 2 10 14 9z" />
    <path fill="#e2e2e2" d="M35 19c3-3 8-6 13-5 11 1 15 11 9 19z" />
    <path fill="#fff" d="M3 32l33-13 22 13c-2 4-5 7-11 7H15c-6 0-9-2-12-7z" />
  </svg>
);

const closeMark = 'M4.500 4.500l7 7M11.500 4.500l-7 7';

const tabs = [
  { title: 'mairacp / mateapp-viernes-clase0', icon: <Octicon name="github" />, state: 'active' },
  { title: 'Welcome to Python.org', icon: <Python />, divider: true },
  { title: 'programa informático - Buscar co', icon: <Google /> },
  { title: 'PyCharm: el IDE de Python para d', icon: <JetBox>JB</JetBox>, state: 'hover' },
];

const repoTabs = [
  ['Código', 'code'],
  ['Asuntos', 'issue'],
  ['Solicitudes de extracción', 'pull'],
  ['Comportamiento', 'play'],
  ['Proyectos', 'project'],
  ['Wiki', 'book'],
  ['Seguridad', 'shield'],
  ['Perspectivas', 'graph'],
  ['Ajustes', 'gear'],
];

const blue = '#76b9ed';
const tasks = [
  { label: 'Edge', icon: <Edge />, bar: blue },
  { label: 'Chrome', icon: <Chrome />, bar: blue, fill: '#6e4f51' },
  { label: 'Explorador', icon: <Folder />, bar: blue },
  { label: 'Tienda', icon: <Store /> },
  { label: 'Correo', icon: <Mail /> },
  { label: 'Swirl', icon: <Swirl /> },
  { label: 'Office', icon: <Office /> },
  { label: 'Zoom', icon: <Zoom />, bar: '#ff6a00', fill: '#ac6432' },
  { label: 'GitHub Desktop', icon: <GithubDesktop />, bar: blue },
  { label: 'Python', icon: <PyConsole />, bar: blue },
  { label: 'Ayuda', icon: <HelpDoc />, bar: blue },
  { label: 'Code', icon: <VsCode />, bar: blue },
  { label: 'Paint', icon: <Paint />, bar: blue },
];

const Browser = () => (
  <>
    <TabStrip>
      {tabs.map((t) => (
        <Tab key={t.title} $state={t.state} $divider={t.divider}>
          {t.icon}
          <TabTitle>{t.title}</TabTitle>
          <IconButton aria-label="Cerrar pestaña"><Line d={closeMark} w={1.8} /></IconButton>
        </Tab>
      ))}
      <IconButton $w={46} $h={34} aria-label="Nueva pestaña"><Line d="M8 2v12M2 8h12" w={2} /></IconButton>
      <WindowControls>
        <IconButton $w={42} $h={34} aria-label="Buscar pestañas">
          <svg width="14" height="14" viewBox="0 0 14 14"><circle cx="7" cy="7" r="7" fill="#202124" /><path fill="#ffadbc" d="M3.800 5h6.400L7 9.800z" /></svg>
        </IconButton>
        <IconButton $w={46} $h={28} aria-label="Minimizar"><Line d="M3 8.500h10" /></IconButton>
        <IconButton $w={46} $h={28} aria-label="Restaurar"><Line d="M3.500 5.500h7v7h-7zM5.500 5.500v-2h7v7h-2" /></IconButton>
        <IconButton $w={46} $h={28} aria-label="Cerrar"><Line d="M3 3l10 10M13 3L3 13" /></IconButton>
      </WindowControls>
    </TabStrip>
    <Toolbar>
      <IconButton $w={32} $h={28} aria-label="Atrás"><Line d="M15 8H2M8 2L2 8l6 6" w={2} /></IconButton>
      <IconButton $w={32} $h={28} $color="#a5888e" aria-label="Adelante"><Line d="M1 8h13M8 2l6 6-6 6" w={2} /></IconButton>
      <IconButton $w={32} $h={28} aria-label="Recargar">
        <Line d="M13.500 4.500A6.300 6.300 0 1014.300 9.500" w={2}><path d="M15 1v6H9z" fill="currentColor" stroke="none" /></Line>
      </IconButton>
      <Omnibox>
        <svg width="12" height="14" viewBox="0 0 12 14" aria-hidden="true">
          <path fill="currentColor" d="M2 5h8l1 1v7H1V6z" /><path fill="none" stroke="currentColor" strokeWidth="1.500" d="M3.500 6V3.500a2.500 2.500 0 015 0V6" />
        </svg>
        <Address aria-label="Dirección" defaultValue="github.com/mairacp/mateapp-viernes-clase02" />
        <IconButton $w={32} $color="#5f5a5c" aria-label="Traducir">
          <svg width="16" height="16" viewBox="0 0 16 16">
            <path fill="currentColor" d="M1 1h6l3 11H2l-1-1z" /><path fill="none" stroke="currentColor" d="M8 3.500h6.500v11H9.500L8 12" />
            <path fill="none" stroke="#e1c4c9" d="M6.500 5a2 2 0 10.300 2.200H5" /><path fill="none" stroke="currentColor" d="M9.500 7H13M11.500 6v1c0 2-1 3-2 4M10 8c.5 2 1.500 3 3 4" />
          </svg>
        </IconButton>
        <IconButton $color="#5f5a5c" aria-label="Favorito">
          <Line d="M8 1.800l1.800 4.300 4.600.4-3.500 3 1.100 4.500L8 11.600 4 14l1.100-4.500-3.500-3 4.600-.4z" w={1.4} />
        </IconButton>
      </Omnibox>
      <IconButton $w={32} $h={28} aria-label="Extensiones">
        <svg width="16" height="16" viewBox="0 0 16 16"><path fill="currentColor" d="M1 4h3.500V3a2 2 0 014 0v1H13v4h1a2 2 0 010 4h-1v3.500H9.500V14a1.800 1.800 0 00-3.600 0v1.500H1V12h1.200a1.900 1.900 0 000-3.800H1z" /></svg>
      </IconButton>
      <IconButton $w={32} $h={28} aria-label="Perfil"><BrickFace size={22} /></IconButton>
      <IconButton $w={33} $h={28} aria-label="Menú">
        <svg width="4" height="14" viewBox="0 0 4 14" fill="currentColor"><circle cx="2" cy="2" r="1.600" /><circle cx="2" cy="7" r="1.600" /><circle cx="2" cy="12" r="1.600" /></svg>
      </IconButton>
    </Toolbar>
  </>
);

const Group = ({ icon, label, count, caret, disabled }) => (
  <ButtonGroup>
    <ActionButton $tall={disabled} disabled={disabled}><Octicon name={icon} />{label}{caret && <Caret $soft />}</ActionButton>
    <Count href="#">{count}</Count>
  </ButtonGroup>
);

export default function App() {
  return (
    <Screen>
      <Global />
      <Browser />
      <SiteHeader>
        <a href="#" aria-label="GitHub"><Octicon name="github" size={32} /></a>
        <SearchBox>
          <SearchInput aria-label="Buscar" placeholder="Busca o salta a ..." />
          <Slash>/</Slash>
        </SearchBox>
        <SiteNav>
          <a href="#">Solicitud de extracción s</a>
          <a href="#">Asuntos</a>
          <a href="#">Mercado</a>
          <a href="#">Explorar</a>
        </SiteNav>
        <HeaderActions>
          <IconButton $color="#fff" aria-label="Notificaciones"><Octicon name="bell" /></IconButton>
          <MenuButton aria-label="Crear"><Line d="M8 2v12M2 8h12" w={1.4} /><Caret /></MenuButton>
          <MenuButton aria-label="Cuenta"><Identicon size={20} /><Caret /></MenuButton>
        </HeaderActions>
      </SiteHeader>

      <RepoHead>
        <RepoRow>
          <Breadcrumb>
            <Octicon name="repo" />
            <a href="#">mairacp</a>/<a href="#"><strong>mateapp-viernes-clase02</strong></a>
          </Breadcrumb>
          <RepoActions>
            <Group icon="eye" label="Dejar de vigilar" count="1" caret />
            <Group icon="star" label="Estrella" count="0" />
            <Group icon="fork" label="Tenedor" count="0" disabled />
          </RepoActions>
        </RepoRow>
        <RepoTabs>
          {repoTabs.map(([label, icon], i) => (
            <RepoTab key={label} href="#" $on={i === 0}><Octicon name={icon} />{label}</RepoTab>
          ))}
        </RepoTabs>
      </RepoHead>

      <Content>
        <div>
          <FileBar>
            <BarButton $gap={8} $pad={16}><Octicon name="branch" />principal<Caret $soft /></BarButton>
            <Stat href="#"><Octicon name="branch" /><strong>1</strong>rama</Stat>
            <Stat href="#"><Octicon name="tag" /><strong>0</strong>etiquetas</Stat>
            <Spacer />
            <BarButton $tall>Ir al archivo</BarButton>
            <BarButton>Agregar archivo<Caret $soft /></BarButton>
            <BarButton $tall $primary $gap={8}><Octicon name="download" />Código<Caret $soft /></BarButton>
          </FileBar>
          <Box>
            <CommitBar>
              <Identicon size={24} />
              <span><strong>mairacp Confirmación</strong> inicial</span>
              <CommitMeta>
                <code>3a3acf3</code>
                <span>hace 1 hora</span>
                <Commits href="#"><Octicon name="history" /><span><strong>1</strong> compromiso</span></Commits>
              </CommitMeta>
            </CommitBar>
            <Files>
              <tbody>
                {['.gitignore', 'README.md'].map((f) => (
                  <tr key={f}>
                    <td><Octicon name="file" /></td>
                    <td><a href="#">{f}</a></td>
                    <td>Compromiso inicial</td>
                    <td>hace 1 hora</td>
                  </tr>
                ))}
              </tbody>
            </Files>
          </Box>
          <Box>
            <ReadmeHead>README.md<IconButton $color="#586069" aria-label="Editar"><Octicon name="pencil" /></IconButton></ReadmeHead>
            <ReadmeBody><Heading>mateapp-viernes-clase02</Heading></ReadmeBody>
          </Box>
        </div>
        <div>
          <Panel $roomy>
            <PanelTitle>Acerca de<IconButton aria-label="Configurar"><Octicon name="gear" /></IconButton></PanelTitle>
            <Blurb>No se proporcionan descripciones, sitios web ni temas.</Blurb>
            <ReadmeLink href="#"><Octicon name="book" />Léame</ReadmeLink>
          </Panel>
          <Panel>
            <PanelTitle>Lanzamientos</PanelTitle>
            <Note>No hay lanzamientos publicados</Note>
            <Note><a href="#">Crea una nueva versión</a></Note>
          </Panel>
          <Panel>
            <PanelTitle>Paquetes</PanelTitle>
            <Note>No hay paquetes publicados</Note>
            <Note><a href="#">Publica tu primer paquete</a></Note>
          </Panel>
        </div>
      </Content>

      <Footer>
        <FooterLinks $gap={39}>
          <li>© 2021 GitHub, Inc.</li>
          {['Condiciones', 'Intimidad', 'Seguridad', 'Estado', 'Docs'].map((t) => <li key={t}><a href="#">{t}</a></li>)}
        </FooterLinks>
        <Octicon name="github" size={24} />
        <FooterLinks $gap={31} $end>
          {['Póngase en contacto con GitHub', 'Precios', 'API', 'Capacitación', 'Blog', 'Acerca de'].map((t) => <li key={t}><a href="#">{t}</a></li>)}
        </FooterLinks>
      </Footer>

      <Taskbar>
        <StartButton $color="#fff" aria-label="Inicio">
          <svg width="16" height="16" viewBox="0 0 16 16"><path fill="currentColor" d="M0 2.300l6.500-.9v6.100H0zM7.500 1.200L16 0v7.500H7.500zM0 8.500h6.500v6.100L0 13.700zM7.500 8.500H16V16l-8.500-1.200z" /></svg>
        </StartButton>
        <TaskSearch>
          <Line d="M6.300 9.700L1 15" w={1.200}><circle cx="10" cy="6" r="5" /></Line>
          <input aria-label="Buscar en Windows" placeholder="Escribe aquí para buscar" />
        </TaskSearch>
        <Task aria-label="Cortana"><Line d="M8 1.500a6.500 6.500 0 100 13 6.500 6.500 0 000-13z" w={2} /></Task>
        <Task aria-label="Vista de tareas"><Line d="M1 1v2h9V1M1.500 5.500h8v5h-8zM1 15v-2h9v2M14 1v3M14 8v7" w={1.200}><path d="M13 5h2v2h-2z" fill="currentColor" stroke="none" /></Line></Task>
        <Grip />
        {tasks.map((t) => (
          <Task key={t.label} aria-label={t.label} $bar={t.bar} $fill={t.fill}>{t.icon}</Task>
        ))}
        <Tray>
          <TrayButton $w={30} aria-label="Obtener ayuda">
            <svg width="24" height="22" viewBox="0 0 24 22">
              <circle cx="11" cy="11" r="10" fill="#1296db" stroke="#fff" strokeWidth="1.800" />
              <path fill="none" stroke="#fff" strokeWidth="2.400" d="M7.500 8.500c0-4 7-4 7 0 0 2.500-3.500 2.500-3.500 5M11 15v2.400" />
              <circle cx="19" cy="16" r="4.800" fill="#0d7fc4" /><path stroke="#fff" strokeWidth="1.400" d="M19 12.800v1.400M19 15v4" />
            </svg>
          </TrayButton>
          <TrayButton aria-label="Mostrar iconos ocultos"><Line d="M2.500 10.500L8 5l5.500 5.500" w={1.2} /></TrayButton>
          <TrayButton aria-label="OneDrive"><CloudArt width={17} /></TrayButton>
          <TrayButton aria-label="Reunirse"><Line d="M3.500 4.500h7v7h-7zM10.500 7l3-1.500v5l-3-1.500M4 1.500c2-1 5-1 7 0M4 14.500c2 1 5 1 7 0" w={1.2} /></TrayButton>
          <TrayButton aria-label="Micrófono">
            <Line d="M3 8v1c0 5 10 5 10 0V8M8 13v2.500M5 15.500h6" w={1.2}><rect x="5.500" y="0" width="5" height="11" fill="currentColor" stroke="none" /></Line>
          </TrayButton>
          <TrayButton aria-label="Red">
            <Line d="M2 14C2.500 8 8 3 14 3M5 14c.5-4.500 4.500-8 9-8M8 14c.5-3 3-5 6-5" w={1.1}><path d="M11 12h3v3h-3z" fill="currentColor" stroke="none" /></Line>
          </TrayButton>
          <TrayButton aria-label="Dropbox">
            <svg width="16" height="14" viewBox="0 0 16 14" fill="currentColor"><path d="M4 0l4 2.500L4 5 0 2.500zM12 0l4 2.500L12 5 8 2.500zM4 5l4 2.500L4 10 0 7.500zM12 5l4 2.500-4 2.500-4-2.500zM8 9l4 2.500L8 14l-4-2.500z" /></svg>
          </TrayButton>
          <TrayButton aria-label="Volumen"><Line d="M.5 6v4h2.500l4 3.500v-11L3 6zM9 6c1 1 1 3 0 4M11 4c2 2 2 6 0 8M13 2c3.200 3 3.200 9 0 12" /></TrayButton>
          <TrayButton $w={34}>ESP</TrayButton>
          <TrayButton $w={74}><span>20:46<br />16/04/2021</span></TrayButton>
          <Notices $w={36} aria-label="Notificaciones">
            <svg width="16" height="16" viewBox="0 0 16 16"><path fill="currentColor" d="M0 0h16v12H7l-3 4v-4H0z" /><path stroke="#22393c" d="M3 3.500h10M3 6.500h10M3 9.500h7" /></svg>
            <Badge>2</Badge>
          </Notices>
          <PeekButton aria-label="Mostrar escritorio" />
        </Tray>
      </Taskbar>

      <HoverCard>
        <CardTitle>PyCharm: el IDE de Python para</CardTitle>
        <CardTitle $dark>desarrolladores profesionales, por ...</CardTitle>
        <p>jetbrains.com</p>
      </HoverCard>

      <Toast>
        <ToastHead>
          <svg width="16" height="16" viewBox="0 0 16 16" aria-hidden="true"><path fill="#4a4a4a" d="M0 0h16v16H0z" /><path fill="#f7d774" d="M4 3h6v9H4z" /><path fill="#fff0b0" d="M4 3l2 1v10l-2-1z" /><path fill="#1585d8" d="M7 13c-1-3 2-3 2.500-4 2-1 3 1 3 2 2 0 2 2 1 2z" /></svg>
          OneDrive
          <IconButton $w={24} $color="#a8a8a8" aria-label="Descartar"><Line d="M3.500 3.500l9 9M12.500 3.500l-9 9" w={1.3} /></IconButton>
        </ToastHead>
        <ToastBody>
          <CloudArt width={60} />
          <p><strong>Capturas de pantalla guardadas</strong>La captura de pantalla se agregó a tu OneDrive.</p>
        </ToastBody>
      </Toast>
    </Screen>
  );
}
